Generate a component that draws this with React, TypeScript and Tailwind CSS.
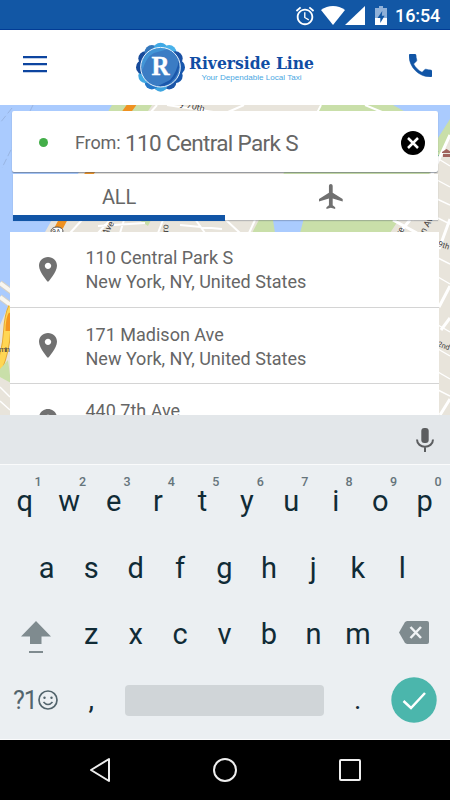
import React from "react";

const ROW1: [string, string][] = [
  ["q", "1"], ["w", "2"], ["e", "3"], ["r", "4"], ["t", "5"],
  ["y", "6"], ["u", "7"], ["i", "8"], ["o", "9"], ["p", "0"],
];
const ROW2 = ["a", "s", "d", "f", "g", "h", "j", "k", "l"];
const ROW3 = ["z", "x", "c", "v", "b", "n", "m"];

const PLACES = [
  "110 Central Park S",
  "171 Madison Ave",
  "440 7th Ave",
];

function StatusBar() {
  return (
    <header className="flex h-[30px] shrink-0 items-start justify-end border-b border-[#023c95] bg-[#1257a5] pr-[9px] text-white">
      <svg className="mt-[5px] h-[22px] w-[22px]" viewBox="0 0 24 24" fill="currentColor">
        <path d="M22 5.72l-4.6-3.86-1.29 1.53 4.6 3.86L22 5.72zM7.88 3.39L6.6 1.86 2 5.71l1.29 1.53 4.59-3.85zM12.5 8H11v6l4.75 2.85.75-1.23-4-2.37V8zM12 4c-4.97 0-9 4.03-9 9s4.02 9 9 9c4.97 0 9-4.03 9-9s-4.03-9-9-9zm0 16c-3.87 0-7-3.13-7-7s3.13-7 7-7 7 3.13 7 7-3.13 7-7 7z" />
      </svg>
      <svg className="ml-[5px] mt-[6px] h-[19px] w-[24px]" viewBox="0 0 24 19" fill="currentColor">
        <path d="M0 4C7-1.300 17-1.300 24 4L12 19Z" />
      </svg>
      <svg className="mt-[6px] h-[19px] w-[20px]" viewBox="0 0 20 19" fill="currentColor">
        <path d="M20 0V19H0Z" />
      </svg>
      <svg className="ml-[10px] mt-[6px] h-[19px] w-[12px]" viewBox="0 0 12 19">
        <path d="M4 0h4v2h4v17H0V2h4z" fill="#8fb0d8" />
        <path d="M0 12h12v7H0z" fill="#fff" />
        <path d="M7.300 5L2.500 12H5.300V17L9.600 9.800H6.800Z" fill="#1257a5" />
      </svg>
      <span className="ml-[8px] mt-[5px] w-[46px] text-[18px] font-medium leading-[22px] tracking-[-0.1px]">16:54</span>
    </header>
  );
}

function Brand() {
  const petals = Array.from({ length: 12 }, (_, i) => i * 30);
  return (
    <svg className="h-[60px] w-[186px]" viewBox="0 0 186 60">
      {petals.map((a, i) => (
        <circle
          key={a}
          cx={26.5 + 17.3 * Math.cos((a * Math.PI) / 180)}
          cy={30.2 + 17.3 * Math.sin((a * Math.PI) / 180)}
          r="7.2"
          fill={["#1757ad", "#1757ad", "#1c56a8", "#3ea5e0", "#2477c8", "#41a9e3", "#164a9a", "#164a9a", "#3478bd", "#3fa9e5", "#49b2ea", "#1a51a5"][i]}
        />
      ))}
      <circle cx="26.5" cy="30.200" r="20" fill="#3b7cc4" />
      <path d="M7.500 26C10 14 22 8 34 12L20 16Q12 20 8.500 33Z" fill="#4295d6" />
      <path d="M45 23Q47 37 36 46Q30 50 23 49.500L36 43Q43 35 45 23Z" fill="#1b58ac" />
      <circle cx="26.500" cy="30.200" r="19.8" fill="none" stroke="#e8f3fc" strokeWidth="1" />
      <text x="26.500" y="38.300" textAnchor="middle" fontFamily="'Liberation Serif',serif" fontWeight="700" fontSize="27" textLength="18" lengthAdjust="spacingAndGlyphs" fill="#fff" stroke="#fff" strokeWidth="0.4">R</text>
      <text x="55" y="31.700" fontFamily="'DejaVu Serif','Liberation Serif',serif" fontWeight="700" fontSize="16.500" textLength="125" lengthAdjust="spacingAndGlyphs" fill="#104da4">Riverside Line</text>
      <text x="67.500" y="42.8" fontFamily="'Liberation Sans',Arial,sans-serif" fontSize="7.600" textLength="100" lengthAdjust="spacingAndGlyphs" fill="#4aa7e2">Your Dependable Local Taxi</text>
    </svg>
  );
}

function AppBar() {
  return (
    <div className="flex h-[75px] shrink-0 items-center bg-white pl-[23px] pr-[18px]">
      <svg className="mt-[-6px] h-[17px] w-[24px]" viewBox="0 0 24 17" fill="#0d45a0">
        <path d="M0 0h24v2.300H0zM0 7h24v2.300H0zM0 14h24v2.300H0z" />
      </svg>
      <div className="-mt-[1px] ml-[87px] h-[60px] w-[186px]"><Brand /></div>
      <svg className="-mt-[5px] ml-auto h-[23px] w-[23px]" viewBox="3 3 18 18" fill="#1155a6" stroke="#1155a6" strokeWidth="0.4">
        <path d="M6.62 10.79c1.44 2.83 3.76 5.14 6.59 6.59l2.2-2.2c.27-.27.67-.36 1.02-.24 1.12.37 2.33.57 3.57.57.55 0 1 .45 1 1V20c0 .55-.45 1-1 1-9.39 0-17-7.610-17-17 0-.55.45-1 1-1h3.500c.55 0 1 .45 1 1 0 1.250.2 2.450.57 3.570.11.350.030.740-.250 1.020l-2.200 2.200z" />
      </svg>
    </div>
  );
}

function CityMap() {
  return (
    <svg className="absolute inset-0 h-[310px] w-[450px]" viewBox="0 105 450 310">
      <rect y="105" width="450" height="310" fill="#e8e4db" />
      <path d="M0 105H117L45 232L10 302L0 325Z" fill="#aacbfe" />
      <path d="M112 105H152L142 120H103Z" fill="#c9dfa9" />
      <path d="M320 105H400L430 130L450 117V135L437 162L390 233H252Z" fill="#c9dfa9" />
      <path d="M393 105H450V119L438 138L420 120Z" fill="#aacbfe" />
      <path d="M273 220L304 218L300 233H275Z" fill="#aacbfe" />
      <path d="M139 220H151L148 226Z" fill="#c9dfa9" />
      <g stroke="#fff" strokeWidth="2" fill="none">
        <path d="M157 105L150 113M167 105L220 113M244 105L228 112M321 105L308 130M365 105L382 112M200 106L206 112" />
        <path d="M82 220L70 233M110 220L98 233M124 220L120 233M163 220L158 233M195 219L205 233M226 220L240 233M255 220L249 233M98 226L145 223M180 225L222 229" />
        <path d="M393 220L417 233M410 220L400 232M450 135L433 172L412 220" strokeWidth="3" />
        <path d="M450 219L439 249M450 286L439 307M450 318L441 330M450 399L440 415" strokeWidth="3" />
        <path d="M437 158L450 166M437 180L450 187M437 199L450 205M438 218L450 224M438 258L450 264M438 277L450 284M438 325L450 332M438 349L450 356M438 372L450 379M438 390L450 396" strokeWidth="1.400" />
        <path d="M0 387L10 397M0 401L10 410" strokeWidth="1.400" />
      </g>
      <path d="M0 283L12 292M0 297L12 306" stroke="#d3d0c8" strokeWidth="6" />
      <path d="M0 283L12 292M0 297L12 306" stroke="#f8f6f0" strokeWidth="4" />
      <path d="M-1 368Q6 350 7 332Q8 315 12 307" stroke="#e5a936" strokeWidth="8" fill="none" />
      <path d="M-1 368Q6 350 7 332Q8 315 12 307" stroke="#ffd653" strokeWidth="6" fill="none" />
      <path d="M8 331Q8 318 11 314" stroke="#f59620" strokeWidth="5" fill="none" />
      <path d="M0 369L8 360L11 383L0 377Z" fill="#c9dfa9" />
      <path d="M133 103L125 114M93 168L85 180M64 218L55 235" stroke="#ef9120" strokeWidth="8" />
      <path d="M12 108L0 123M33 105L2 168" stroke="#91abd6" strokeWidth="0.700" strokeDasharray="7 3" />
      <ellipse cx="57" cy="231" rx="6" ry="4" fill="#fff" stroke="#555" />
      <g fontFamily="Roboto,sans-serif" fontSize="9" fill="#44423f">
        <text x="52" y="234" fontSize="7">9A</text>
        <text x="-1" y="352" fontSize="8" textLength="11">min</text>
        <text transform="translate(180 106) rotate(14)">y 70th</text>
        <text transform="translate(107 236) rotate(-60)">Ave</text>
        <text transform="translate(168 238) rotate(-88)">Bro</text>
        <text transform="translate(400 237) rotate(-60)">ve</text>
        <text transform="translate(425 234) rotate(-62)">n Ave</text>
        <text transform="translate(437.500 246) rotate(18)" fontSize="8">9th</text>
        <text transform="translate(437 346) rotate(20)" fontSize="7.500">2nd</text>
        <text x="434" y="156">k</text>
      </g>
      <path d="M442 152L446.500 149L451 152V153H442ZM443 154H451V157H443Z" fill="#a0635d" />
    </svg>
  );
}

function SearchCard() {
  return (
    <div className="mx-[12px] mt-[6px] flex h-[61px] w-[426px] items-center rounded-[2px] bg-white pl-[27px] pr-[13px] text-[#666] shadow-[0_1px_1px_rgba(70,80,100,0.55)]">
      <span className="mt-[2px] h-[9px] w-[9px] rounded-full bg-[#43ae49]" />
      <span className="ml-[27px] mt-[3px] w-[50px] text-[18px] leading-[24px] tracking-[-0.1px]">From:</span>
      <span className="mt-[2px] flex-1 whitespace-nowrap text-[22.5px] leading-[28px] tracking-[-0.65px]">110 Central Park S</span>
      <svg className="mt-[2px] h-[24px] w-[24px]" viewBox="0 0 24 24">
        <circle cx="12" cy="12" r="12" fill="#000" />
        <path d="M7 7L17 17M17 7L7 17" stroke="#fff" strokeWidth="2.500" />
      </svg>
    </div>
  );
}

function Tabs() {
  return (
    <div className="ml-[13px] mt-[2px] flex h-[46px] w-[425px] bg-white shadow-[0_1px_1px_rgba(70,80,100,0.3)]">
      <div className="flex h-[47px] w-[212px] justify-center border-b-[6px] border-[#1155a6] pt-[10px] text-[20px] leading-[26px] tracking-[-0.2px] text-[#666]">ALL</div>
      <div className="flex h-[46px] flex-1 justify-center pt-[10px]">
        <svg className="h-[25px] w-[25px]" viewBox="2.300 2 19.500 20" fill="#707070">
          <path d="M21 16v-2l-8-5V3.500c0-.83-.67-1.500-1.500-1.500S10 2.670 10 3.500V9l-8 5v2l8-2.500V19l-2 1.500V22l3.500-1 3.500 1v-1.500L13 19v-5.500l8 2.500z" />
        </svg>
      </div>
    </div>
  );
}

function Results() {
  return (
    <div className="ml-[10px] mt-[12px] h-[183px] w-[429px] overflow-hidden bg-white">
      {PLACES.map((p) => (
        <div key={p} className="flex h-[76.2px] border-b border-[#d4d4d4] pl-[29px]">
          <svg className="mt-[25px] h-[25px] w-[18px] shrink-0" viewBox="5 2 14 20" preserveAspectRatio="none" fill="#717171">
            <path d="M12 2C8.130 2 5 5.130 5 9c0 5.250 7 13 7 13s7-7.750 7-13c0-3.870-3.130-7-7-7zm0 9.500c-1.380 0-2.500-1.120-2.500-2.500s1.120-2.500 2.500-2.500 2.500 1.120 2.500 2.500-1.120 2.500-2.500 2.500z" />
          </svg>
          <div className="ml-[28.5px] mt-[14.4px] whitespace-nowrap text-[18px] leading-[24px] text-[#666]">
            <div>{p}</div>
            <div>New York, NY, United States</div>
          </div>
        </div>
      ))}
    </div>
  );
}

function Key({ label, hint }: { label: string; hint?: string }) {
  return (
    <div className="relative w-[44.45px] text-center text-[29px] leading-[40px]">
      {label}
      {hint && <span className="absolute left-[32px] top-[-6px] text-[12.5px] font-medium leading-[14px] text-[#65747b]">{hint}</span>}
    </div>
  );
}

function Keyboard() {
  return (
    <section className="flex h-[325px] shrink-0 flex-col bg-[#ebeff2] text-[#102b36]">
      <div className="flex h-[50px] justify-end border-b border-[#fafbfc] bg-[#e3e7ea] pr-[16px] pt-[13px]">
        <svg className="h-[24px] w-[18px]" viewBox="0 0 18 24">
          <rect x="5.300" y="0" width="7.400" height="15" rx="3" fill="#5c5e60" />
          <path d="M1 11.500C1 21 17 21 17 11.500M9 18.500V24" fill="none" stroke="#5c5e60" strokeWidth="2" />
        </svg>
      </div>
      <div className="flex h-[66px] pl-[2.5px] pt-[16px]">
        {ROW1.map(([l, n]) => <Key key={l} label={l} hint={n} />)}
      </div>
      <div className="flex h-[67px] pl-[24.5px] pt-[17px]">
        {ROW2.map((l) => <Key key={l} label={l} />)}
      </div>
      <div className="flex h-[67px] pl-[21px] pt-[16px]">
        <svg className="mt-[7px] h-[33px] w-[30px] shrink-0" viewBox="0 0 30 33" fill="#7f8b8f">
          <path d="M15 0L30 15.500H20.500V23H9V15.500H0ZM8 30h14v2H8z" />
        </svg>
        <div className="ml-[18px] flex">{ROW3.map((l) => <Key key={l} label={l} />)}</div>
        <svg className="ml-[18.500px] mt-[7px] h-[23px] w-[30px] shrink-0" viewBox="0 0 30 23">
          <path d="M8 0H28Q30 0 30 2V21Q30 23 28 23H8L6 22L0 11.500L6 1Z" fill="#7f8b8f" />
          <path d="M11.500 6L22 17M22 6L11.500 17" stroke="#f0f3f5" strokeWidth="2.500" />
        </svg>
      </div>
      <div className="flex h-[74px] pl-[13px] pt-[2px]">
        <div className="flex w-[45px] whitespace-nowrap pt-[18px] text-[25px] leading-[32px] text-[#52646c]">
          <span className="w-[24.500px] shrink-0 tracking-[-1px]">?1</span>
          <svg className="mt-[5px] h-[20px] w-[20px] shrink-0" viewBox="0 0 20 20" fill="none" stroke="#52646c" strokeWidth="1.700">
            <circle cx="10" cy="10" r="9" />
            <path d="M5.500 12Q10 17 14.500 12" />
            <circle cx="6.500" cy="7.800" r="1.200" fill="#52646c" stroke="none" />
            <circle cx="13.500" cy="7.800" r="1.200" fill="#52646c" stroke="none" />
          </svg>
        </div>
        <span className="ml-[30.500px] w-[36.500px] pt-[14px] text-[28px] leading-[38px]">,</span>
        <div className="mt-[18px] h-[31px] w-[199px] rounded-[4px] bg-[#d0d5d8]" />
        <span className="ml-[30px] w-[37px] pt-[14px] text-[28px] leading-[38px]">.</span>
        <svg className="mt-[10px] h-[46px] w-[46px]" viewBox="0 0 46 46">
          <circle cx="23" cy="23" r="22.700" fill="#4bb6ac" />
          <path d="M12.500 24L20 31L34 16" fill="none" stroke="#fff" strokeWidth="2.500" />
        </svg>
      </div>
      <div className="h-px bg-[#fafbfc]" />
    </section>
  );
}

function NavBar() {
  return (
    <nav className="flex h-[60px] shrink-0 items-center bg-black pl-[89px]">
      <svg className="h-[26px] w-[22px]" viewBox="0 0 22 26" fill="none" stroke="#eee" strokeWidth="2" strokeLinejoin="round">
        <path d="M20 2V24L2 13Z" />
      </svg>
      <svg className="ml-[102px] h-[24px] w-[24px]" viewBox="0 0 24 24" fill="none" stroke="#eee" strokeWidth="2">
        <circle cx="12" cy="12" r="11" />
      </svg>
      <svg className="ml-[102px] h-[22px] w-[22px]" viewBox="0 0 22 22" fill="none" stroke="#eee" strokeWidth="2">
        <rect x="1" y="1" width="20" height="20" rx="1" />
      </svg>
    </nav>
  );
}

export default function App() {
  return (
    <div className="flex h-[800px] w-[450px] flex-col overflow-hidden bg-white font-[Roboto,sans-serif]">
      <StatusBar />
      <AppBar />
      <main className="relative h-[310px] shrink-0 overflow-hidden">
        <CityMap />
        <div className="relative flex flex-col">
          <SearchCard />
          <Tabs />
          <Results />
        </div>
      </main>
      <Keyboard />
      <NavBar />
    </div>
  );
}
